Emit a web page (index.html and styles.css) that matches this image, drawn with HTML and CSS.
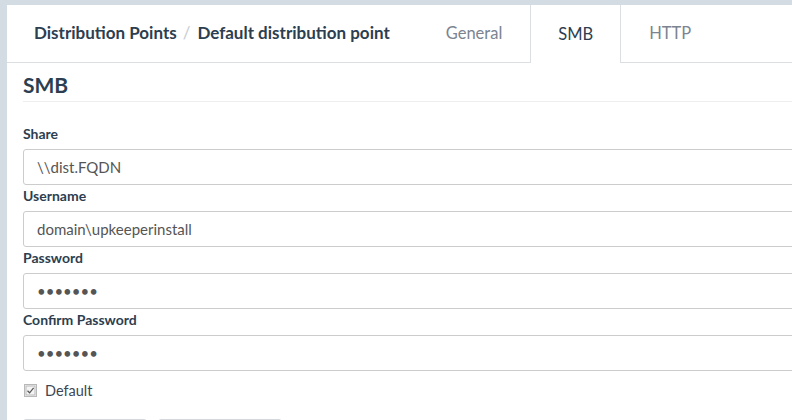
FILE: index.html
```html
<!DOCTYPE html>
<html>
<head>
<meta charset="utf-8">
<link rel="stylesheet" href="styles.css">
</head>
<body>
<div class="page">
  <div class="panel">
    <div class="header">
      <div class="crumb">Distribution Points<span class="sep">/</span>Default distribution point</div>
      <div class="tabs">
        <div class="tab">General</div>
        <div class="tab active">SMB</div>
        <div class="tab">HTTP</div>
      </div>
    </div>
    <div class="content">
      <h2 class="section-title">SMB</h2>
      <form class="form">
        <label class="label" for="share">Share</label>
        <input class="input" id="share" type="text" value="\\dist.FQDN">
        <label class="label" for="user">Username</label>
        <input class="input" id="user" type="text" value="domain\upkeeperinstall">
        <label class="label" for="pw">Password</label>
        <input class="input" id="pw" type="password" value="1234567">
        <label class="label" for="pw2">Confirm Password</label>
        <input class="input" id="pw2" type="password" value="1234567">
        <div class="check-row">
          <svg class="check" width="13" height="13" viewBox="0 0 13 13">
            <rect x="0.5" y="0.5" width="12" height="12" fill="#f4f4f4" stroke="#777" stroke-width="1" stroke-dasharray="1 1"/>
            <rect x="2" y="2" width="9" height="9" fill="none" stroke="#b9b9b9" stroke-width="1"/>
            <path d="M3.5 6.8 L5.6 8.8 L9.6 3.8" fill="none" stroke="#555" stroke-width="1.2"/>
          </svg>
          <span class="check-label">Default</span>
        </div>
        <div class="buttons">
          <button type="button" class="btn" aria-label="Save"></button>
          <button type="button" class="btn" aria-label="Cancel"></button>
        </div>
      </form>
    </div>
  </div>
</div>
</body>
</html>
```

FILE: styles.css
```css
html, body {
  margin: 0;
  padding: 0;
}
body {
  background: #d3dce3;
  overflow: hidden;
  height: 420px;
  font-family: Lato, "Open Sans", sans-serif;
}
.page {
  padding: 5px 0 0 7px;
}
.panel {
  background: #ffffff;
  width: 1100px;
  height: 415px;
  overflow: hidden;
}
.header {
  display: flex;
  height: 57px;
  border-bottom: 1px solid #dcdfe2;
}
.crumb {
  align-self: center;
  padding-left: 27px;
  font-size: 17px;
  font-weight: 700;
  color: #2c3e50;
  margin-top: -2px;
}
.sep {
  color: #c8cdd2;
  font-weight: 400;
  margin: 0 7px 0 6px;
}
.tabs {
  display: flex;
  margin-left: 28px;
}
.tab {
  display: flex;
  align-items: center;
  padding: 0 27px 1px;
  font-size: 16.5px;
  color: #7b8490;
  border-left: 1px solid transparent;
  border-right: 1px solid transparent;
}
.tab.active {
  color: #2c3e50;
  background: #ffffff;
  border-left-color: #dcdfe2;
  border-right-color: #dcdfe2;
  height: 58px;
  box-sizing: border-box;
}
.content {
  padding-left: 16px;
}
.section-title {
  margin: 0;
  padding: 10px 0 4px;
  font-size: 21px;
  line-height: 24px;
  font-weight: 700;
  color: #2c3e50;
  border-bottom: 1px solid #eceeef;
}
.form {
  display: flex;
  flex-direction: column;
  padding-top: 22px;
}
.label {
  font-size: 14px;
  line-height: 20px;
  font-weight: 700;
  color: #2c3e50;
  margin-bottom: 5px;
}
.input {
  box-sizing: border-box;
  height: 36px;
  margin: 0 0 1px;
  padding: 0 13px;
  border: 1px solid #cccccc;
  border-radius: 3px;
  font-family: Lato, "Open Sans", sans-serif;
  font-size: 15px;
  color: #555555;
  background: #ffffff;
  outline: none;
}
.check-row {
  display: flex;
  align-items: center;
  gap: 8px;
  margin-top: 10px;
  padding-left: 1px;
}
.check-label {
  font-size: 14.5px;
  color: #3d4752;
}
.buttons {
  display: flex;
  gap: 11px;
  margin-top: 20px;
  flex-shrink: 0;
}
.btn {
  width: 124px;
  height: 34px;
  flex-shrink: 0;
  border: 1px solid #d4d8dc;
  border-radius: 3px;
  background: #ffffff;
}
```
